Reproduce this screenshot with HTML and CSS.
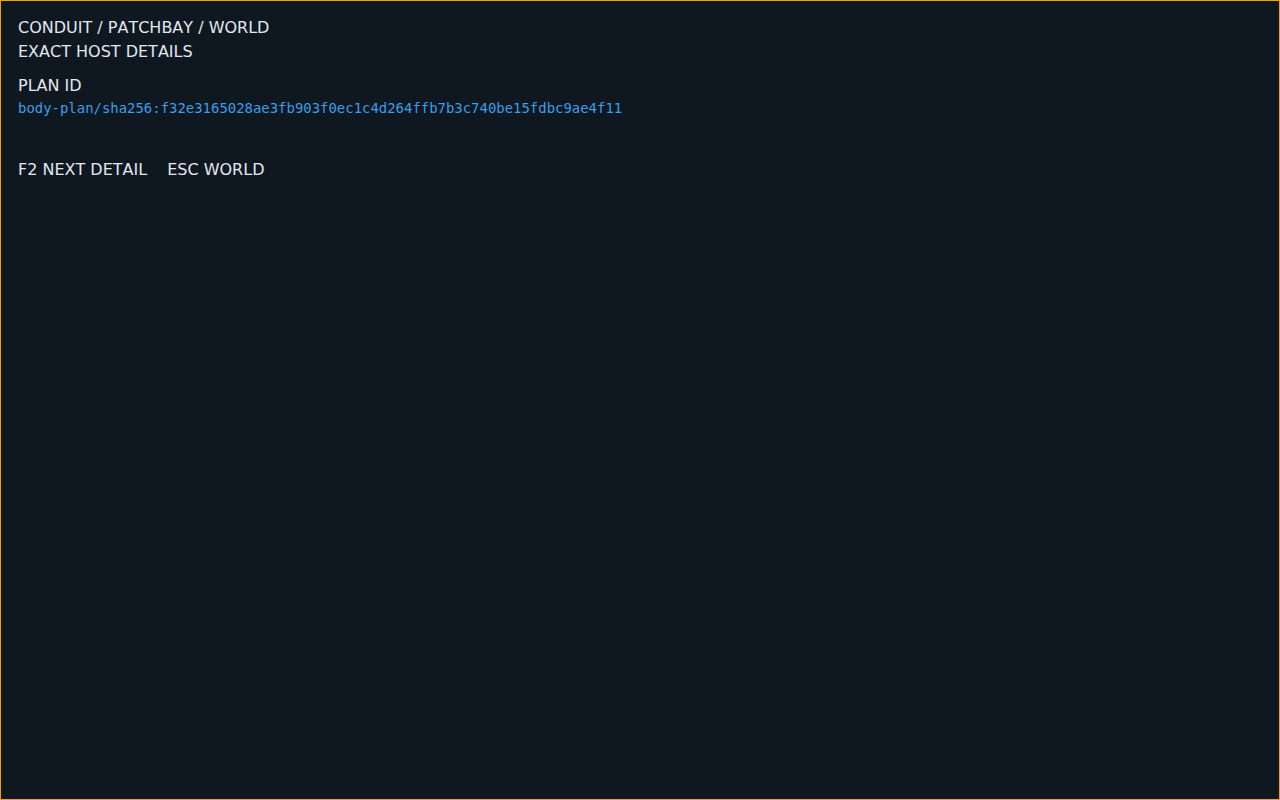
FILE: index.html
```html
<!DOCTYPE html>
<html>
<head>
<meta charset="utf-8">
<link rel="stylesheet" href="styles.css">
</head>
<body>
<div class="screen">
  <header class="head">
    <div class="line">CONDUIT / PATCHBAY / WORLD</div>
    <div class="line">EXACT HOST DETAILS</div>
  </header>
  <section class="detail">
    <div class="line">PLAN ID</div>
    <div class="mono">body-plan/sha256:f32e3165028ae3fb903f0ec1c4d264ffb7b3c740be15fdbc9ae4f11</div>
  </section>
  <footer class="keys">
    <span>F2 NEXT DETAIL</span>
    <span>ESC WORLD</span>
  </footer>
</div>
</body>
</html>
```

FILE: styles.css
```css
html, body {
  margin: 0;
  padding: 0;
  height: 100%;
}
body {
  background: #0f1720;
  color: #e2e8f0;
  font-family: "DejaVu Sans", sans-serif;
  font-size: 16px;
  font-kerning: none;
}
.screen {
  box-sizing: border-box;
  height: 800px;
  width: 1280px;
  border: 1px solid #f0a500;
  padding: 15px 17px;
  display: flex;
  flex-direction: column;
}
.line {
  line-height: 24px;
}
.detail {
  margin-top: 10px;
  display: flex;
  flex-direction: column;
}
.mono {
  font-family: "DejaVu Sans Mono", monospace;
  font-size: 13.95px;
  line-height: 20px;
  color: #3b9fe8;
}
.keys {
  margin-top: 40px;
  display: flex;
  gap: 20px;
  line-height: 24px;
}
```
